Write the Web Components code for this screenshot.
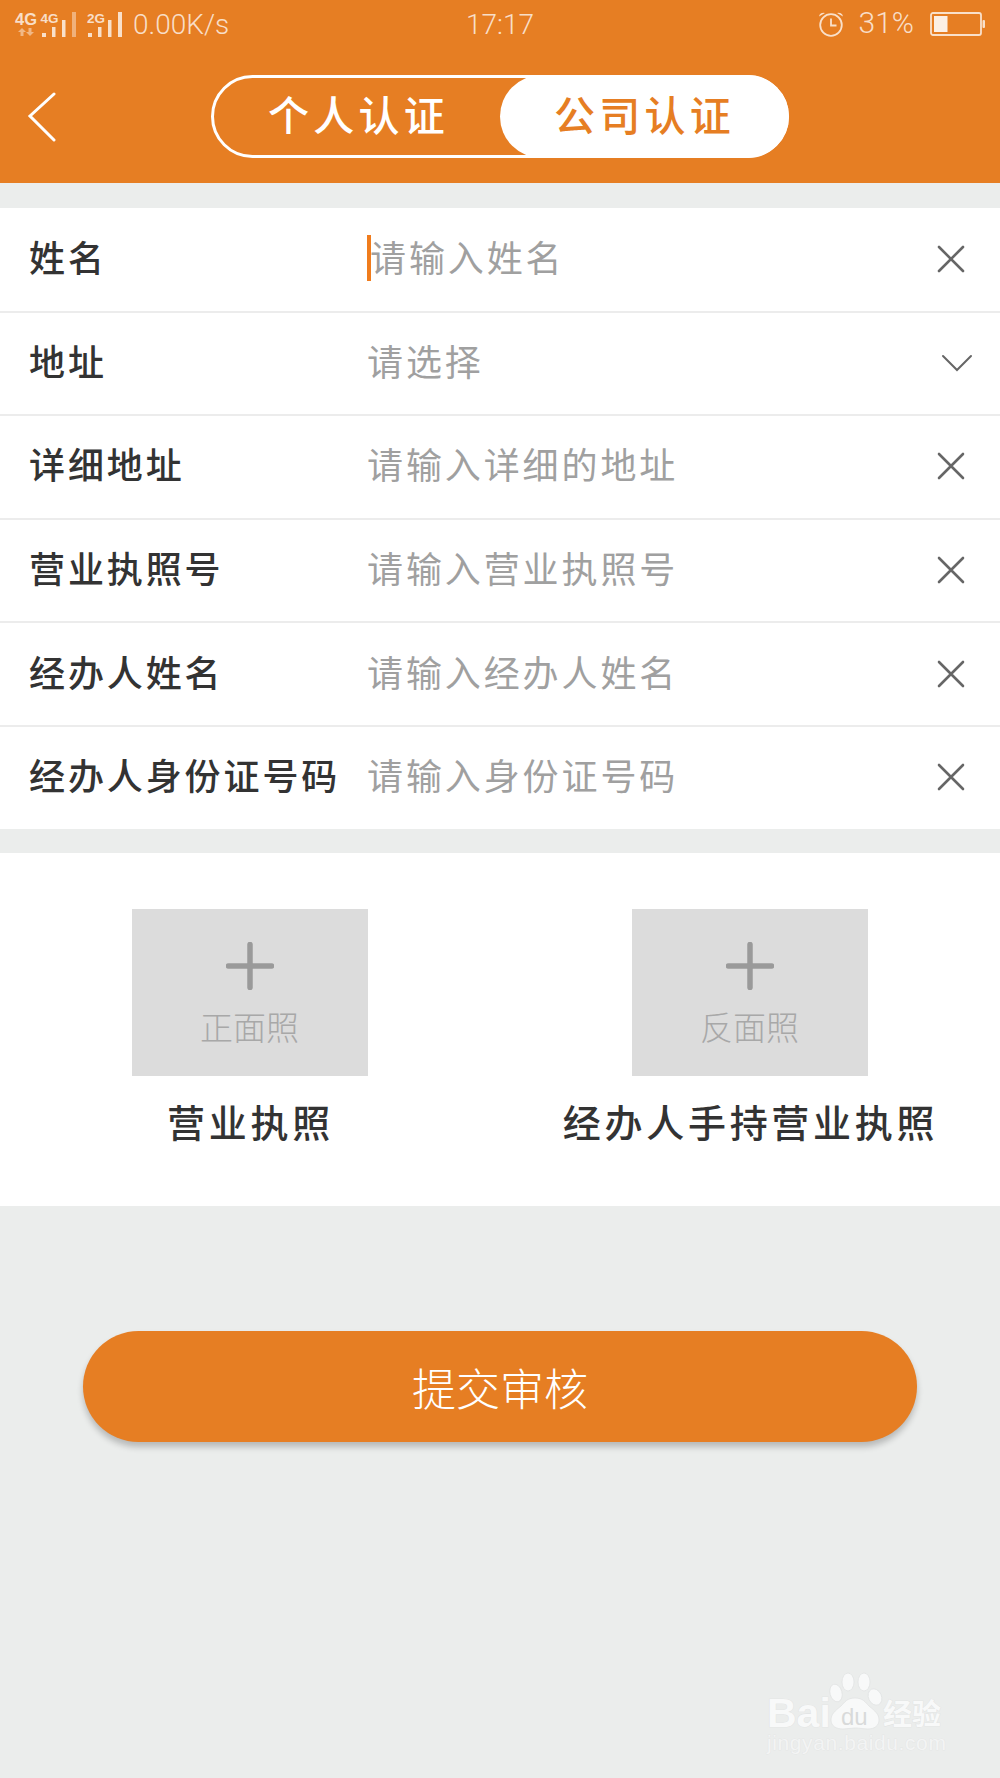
<!DOCTYPE html>
<html lang="zh">
<head>
<meta charset="utf-8">
<title>认证</title>
<style>
  html, body { margin: 0; padding: 0; }
  body {
    position: relative;
    width: 1000px;
    height: 1778px;
    overflow: hidden;
    background: #ebedec;
    font-family: "Noto Sans CJK SC", "Noto Sans", sans-serif;
  }
</style>
</head>
<body>
<app-header></app-header>
<form-list>
  <form-row label="姓名" placeholder="请输入姓名" focused></form-row>
  <form-row label="地址" placeholder="请选择" icon="chevron"></form-row>
  <form-row label="详细地址" placeholder="请输入详细的地址"></form-row>
  <form-row label="营业执照号" placeholder="请输入营业执照号"></form-row>
  <form-row label="经办人姓名" placeholder="请输入经办人姓名"></form-row>
  <form-row label="经办人身份证号码" placeholder="请输入身份证号码"></form-row>
</form-list>
<upload-section>
  <upload-card hint="正面照" caption="营业执照"></upload-card>
  <upload-card hint="反面照" caption="经办人手持营业执照"></upload-card>
</upload-section>
<submit-button>提交审核</submit-button>
<baidu-mark></baidu-mark>

<script>
class StatusBar extends HTMLElement {
  constructor() {
    super();
    this.attachShadow({ mode: 'open' });
  }

  connectedCallback() {
    this.shadowRoot.innerHTML = `
      <style>
        :host {
          display: grid;
          grid-template-columns: 1fr auto 1fr;
          align-items: center;
          height: 48px;
          color: rgba(255, 255, 255, 0.76);
          font-family: Roboto, "Noto Sans", sans-serif;
          font-weight: 300;
          font-size: 28px;
        }
        .left, .right { display: flex; align-items: center; }
        .left { padding-left: 14px; gap: 9px; }
        .right { justify-content: flex-end; padding-right: 14px; }
        svg { display: block; flex: none; }
        .pct { margin: 0 16px 3px 14px; font-size: 30px; }
        .speed, .time { margin-top: 1px; }
      </style>
      <div class="left">
        <svg width="110" height="48" viewBox="14 0 110 48" fill="#fff" fill-opacity="0.76">
          <text x="15" y="25" font-family="Liberation Sans" font-weight="700" font-size="16.500">4G</text>
          <text x="40.500" y="23" font-family="Liberation Sans" font-weight="700" font-size="13.500">4G</text>
          <path d="M22 28l-4 4h2.500v4h3v-4h2.500zM30 36l4-4h-2.500v-4h-3v4h-2.500z" fill-opacity="0.45"/>
          <rect x="42" y="33" width="4" height="4"/>
          <rect x="52" y="27" width="3.500" height="10"/>
          <rect x="62" y="20" width="3.500" height="17"/>
          <rect x="72" y="12" width="4" height="25" fill-opacity="0.4"/>
          <text x="87" y="23" font-family="Liberation Sans" font-weight="700" font-size="13.500">2G</text>
          <rect x="88" y="33" width="4" height="4"/>
          <rect x="98" y="27" width="3.500" height="10"/>
          <rect x="108" y="20" width="3.500" height="17"/>
          <rect x="118" y="12" width="4" height="25"/>
        </svg>
        <span class="speed">0.00K/s</span>
      </div>
      <span class="time">17:17</span>
      <div class="right">
        <svg width="28" height="28" viewBox="0 0 28 28" fill="none" stroke="#fff" stroke-opacity="0.76" stroke-width="1.800">
          <circle cx="14" cy="15" r="10.800"/>
          <path d="M14 8.500v7h5.500"/>
          <path d="M2 6.500a4.500 4.500 0 0 1 6-3.500zM26 6.500a4.500 4.500 0 0 0-6-3.500z" fill="#fff" fill-opacity="0.76" stroke="none"/>
        </svg>
        <span class="pct">31%</span>
        <svg width="56" height="24" viewBox="0 0 56 24">
          <rect x="1" y="1" width="50" height="22" rx="2" fill="none" stroke="#fff" stroke-opacity="0.76" stroke-width="1.800"/>
          <rect x="4" y="4" width="13.500" height="16" fill="#fff" fill-opacity="0.88"/>
          <rect x="52.500" y="8" width="2.500" height="8" rx="1" fill="#fff" fill-opacity="0.76"/>
        </svg>
      </div>
    `;
  }
}

class AppHeader extends HTMLElement {
  constructor() {
    super();
    this.attachShadow({ mode: 'open' });
  }

  connectedCallback() {
    this.shadowRoot.innerHTML = `
      <style>
        :host {
          display: block;
          height: 183px;
          background: #e67e23;
          margin-bottom: 25px;
        }
        nav {
          display: grid;
          grid-template-columns: 1fr 578px 1fr;
          align-items: center;
          padding-top: 27px;
        }
        .back { display: block; margin-left: 27px; }
        .toggle {
          display: flex;
          box-sizing: border-box;
          height: 83px;
          border: 3px solid #fff;
          border-radius: 42px;
        }
        .tab {
          flex: 1;
          display: flex;
          align-items: center;
          justify-content: center;
          padding-bottom: 7px;
          color: #fff;
          font-size: 41px;
          font-weight: 500;
          letter-spacing: 4.200px;
        }
        .tab.active {
          flex: none;
          width: 289px;
          margin: -3px;
          background: #fff;
          border-radius: 42px;
          color: #e67e23;
        }
      </style>
      <status-bar></status-bar>
      <nav>
        <svg class="back" width="30" height="50" viewBox="0 0 30 50" fill="none" stroke="#fff" stroke-width="3" stroke-linecap="round">
          <path d="M27 2 L3 24 L27 48"/>
        </svg>
        <div class="toggle">
          <div class="tab">个人认证</div>
          <div class="tab active">公司认证</div>
        </div>
      </nav>
    `;
  }
}

class FormList extends HTMLElement {
  constructor() {
    super();
    this.attachShadow({ mode: 'open' });
    this.shadowRoot.innerHTML = `
      <style>
        :host { display: block; background: #fff; margin-bottom: 24.150px; }
      </style>
      <slot></slot>
    `;
  }
}

class FormRow extends HTMLElement {
  constructor() {
    super();
    this.attachShadow({ mode: 'open' });
  }

  connectedCallback() {
    const isChevron = this.getAttribute('icon') === 'chevron';
    const focused = this.hasAttribute('focused');
    const icon = isChevron
      ? `<svg class="chevron" width="32" height="18" viewBox="0 0 32 18" fill="none" stroke="#666" stroke-width="2" stroke-linecap="round"><path d="M2 2 L16 16 L30 2"/></svg>`
      : `<svg class="cross" width="28" height="28" viewBox="0 0 28 28" fill="none" stroke="#666" stroke-width="2.600" stroke-linecap="round"><path d="M2 2 L26 26 M26 2 L2 26"/></svg>`;
    this.shadowRoot.innerHTML = `
      <style>
        :host {
          display: flex;
          align-items: center;
          box-sizing: border-box;
          height: 103.670px;
          padding-left: 29px;
          border-top: 2px solid #ececec;
          letter-spacing: 2.900px;
          font-size: 36px;
        }
        :host(:first-child) { height: 102.500px; border-top: 0; }
        .label, .value { margin-bottom: 7px; white-space: nowrap; }
        .label { width: 338px; flex: none; color: #333; font-weight: 500; }
        .value { flex: 1; position: relative; color: #a0a0a0; }
        .value.focused { padding-left: 3px; }
        .caret {
          position: absolute;
          left: 0;
          top: 5px;
          width: 4px;
          height: 46px;
          background: #f07c1d;
        }
        .cross { margin: 0 35px 1px 0; }
        .chevron { margin: 0 27px 1px 0; }
        svg { display: block; flex: none; }
      </style>
      <span class="label">${this.getAttribute('label')}</span>
      <span class="value${focused ? ' focused' : ''}">${this.getAttribute('placeholder')}${focused ? '<i class="caret"></i>' : ''}</span>
      ${icon}
    `;
  }
}

class UploadSection extends HTMLElement {
  constructor() {
    super();
    this.attachShadow({ mode: 'open' });
    this.shadowRoot.innerHTML = `
      <style>
        :host {
          display: grid;
          grid-template-columns: 499px 501px;
          box-sizing: border-box;
          height: 353px;
          padding-top: 56px;
          background: #fff;
        }
      </style>
      <slot></slot>
    `;
  }
}

class UploadCard extends HTMLElement {
  constructor() {
    super();
    this.attachShadow({ mode: 'open' });
  }

  connectedCallback() {
    this.shadowRoot.innerHTML = `
      <style>
        :host { display: flex; flex-direction: column; align-items: center; }
        .box {
          box-sizing: border-box;
          width: 236px;
          height: 167px;
          padding-top: 33px;
          background: #dcdcdc;
          display: flex;
          flex-direction: column;
          align-items: center;
          gap: 14px;
        }
        .hint { color: #a8a8a8; font-size: 33px; line-height: 44px; font-weight: 300; }
        .caption {
          margin-top: 17px;
          padding-left: 2px;
          color: #333;
          font-size: 38px;
          line-height: 56px;
          font-weight: 500;
          letter-spacing: 3.700px;
          white-space: nowrap;
        }
        svg { display: block; flex: none; }
      </style>
      <div class="box">
        <svg width="48" height="48" viewBox="0 0 48 48" stroke="#9a9a9a" stroke-width="5.500" stroke-linecap="round">
          <path d="M24 2.500v43M2.500 24h43"/>
        </svg>
        <span class="hint">${this.getAttribute('hint')}</span>
      </div>
      <div class="caption">${this.getAttribute('caption')}</div>
    `;
  }
}

class SubmitButton extends HTMLElement {
  constructor() {
    super();
    this.attachShadow({ mode: 'open' });
    this.shadowRoot.innerHTML = `
      <style>
        :host {
          display: flex;
          align-items: center;
          justify-content: center;
          box-sizing: border-box;
          height: 111px;
          margin: 125px 83px 0;
          padding-top: 2px;
          border-radius: 56px;
          background: #e67e23;
          box-shadow: 0 5px 6px rgba(0, 0, 0, 0.22);
          color: #fff;
          font-size: 44px;
          font-weight: 300;
        }
      </style>
      <slot></slot>
    `;
  }
}

class BaiduMark extends HTMLElement {
  constructor() {
    super();
    this.attachShadow({ mode: 'open' });
    this.shadowRoot.innerHTML = `
      <style>
        :host {
          position: absolute;
          left: 760px;
          top: 1665px;
          width: 200px;
          height: 105px;
        }
        svg { display: block; overflow: visible; }
        text { fill: #f8f9f9; stroke: #dfe1e1; stroke-width: 0.700; paint-order: stroke; }
      </style>
      <svg width="200" height="105" viewBox="760 1665 200 105">
        <text x="767" y="1727" font-family="Liberation Sans" font-weight="700" font-size="41">Bai</text>
        <g fill="#f8f9f9" stroke="#dfe1e1" stroke-width="0.700">
          <ellipse cx="848" cy="1682" rx="6" ry="9"/>
          <ellipse cx="864" cy="1682" rx="6" ry="9"/>
          <ellipse cx="836" cy="1693" rx="6" ry="9" transform="rotate(-15 836 1693)"/>
          <ellipse cx="875" cy="1697" rx="6.500" ry="8.500" transform="rotate(-25 875 1697)"/>
          <path d="M855 1698c-8 0-10 4-14 8-6 5-10 8-10 14 0 6 5 9 12 9 4 0 8-1 12-1 5 0 9 1 13 1 6 0 11-3 11-9 0-6-4-9-10-14-4-4-6-8-14-8z"/>
        </g>
        <text x="841" y="1725" font-family="Liberation Sans" font-size="24" style="fill:#d8dada;stroke:none">du</text>
        <text x="883" y="1725" font-family="Noto Sans CJK SC" font-weight="700" font-size="29">经验</text>
        <text x="767" y="1750" font-family="Liberation Sans" font-size="21" letter-spacing="0.600" style="fill:#f3f4f4;stroke-width:0.500">jingyan.baidu.com</text>
      </svg>
    `;
  }
}

customElements.define('status-bar', StatusBar);
customElements.define('app-header', AppHeader);
customElements.define('form-list', FormList);
customElements.define('form-row', FormRow);
customElements.define('upload-section', UploadSection);
customElements.define('upload-card', UploadCard);
customElements.define('submit-button', SubmitButton);
customElements.define('baidu-mark', BaiduMark);
</script>
</body>
</html>
